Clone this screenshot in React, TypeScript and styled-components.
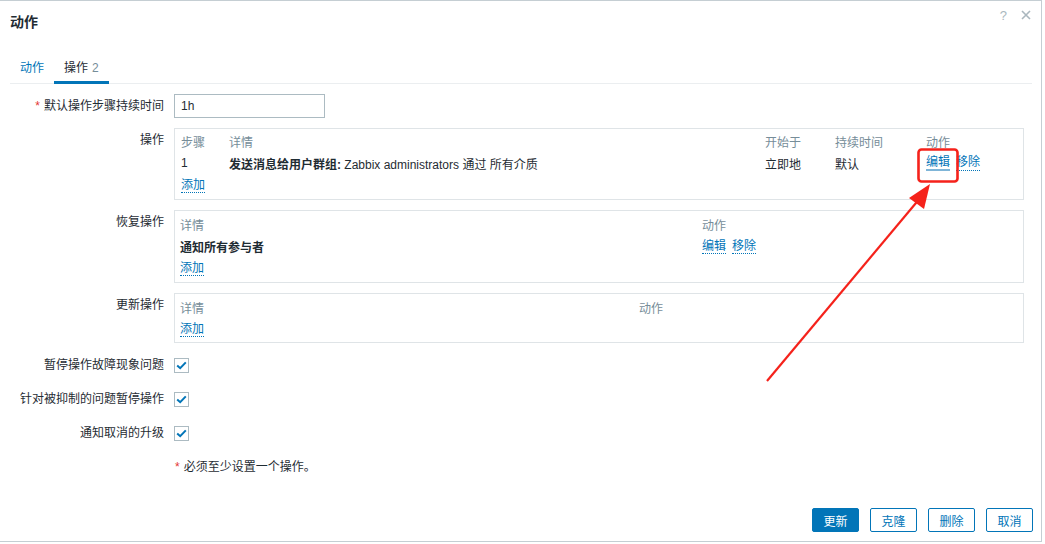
import styled, { createGlobalStyle } from "styled-components";

const GlobalStyle = createGlobalStyle`
  html, body {
    margin: 0;
    padding: 0;
    background: #ffffff;
  }
  body {
    font-family: "Liberation Sans", Arial, "Noto Sans CJK SC", sans-serif;
    font-size: 12px;
    color: #1f2c33;
  }
`;

const Dialog = styled.div`
  position: relative;
  box-sizing: border-box;
  width: 1042px;
  height: 542px;
  border: 1px solid #c5ced3;
  border-left: none;
  background: #fff;
  display: flex;
  flex-direction: column;
`;

const Header = styled.div`
  display: flex;
  align-items: center;
  height: 40px;
  padding: 0 10px;
`;

const Title = styled.h4`
  flex: 1;
  margin: 0;
  font-size: 14px;
  font-weight: bold;
  color: #1f2c33;
`;

const HelpIcon = styled.span`
  color: #aab7be;
  font-size: 13px;
  line-height: 1;
  margin-top: -12px;
`;

const CloseIcon = styled.span`
  display: inline-flex;
  margin-left: 14px;
  margin-top: -12px;
`;

const Body = styled.div`
  flex: 1;
  padding: 0 9px 0 10px;
  display: flex;
  flex-direction: column;
`;

const TabBar = styled.div`
  display: flex;
  margin-top: 14px;
  border-bottom: 1px solid #ebeef0;
  height: 28px;
`;

const Tab = styled.div<{ $active?: boolean }>`
  padding: 0 10px;
  line-height: 26px;
  color: ${({ $active }) => ($active ? "#1f2c33" : "#0275b8")};
  border-bottom: 3px solid ${({ $active }) => ($active ? "#0275b8" : "transparent")};
  margin-bottom: -1px;
`;

const Count = styled.span`
  color: #768d99;
  margin-left: 4px;
`;

const Form = styled.div`
  display: grid;
  grid-template-columns: 154px 1fr;
  column-gap: 10px;
  row-gap: 10px;
  margin-top: 10px;
  padding-right: 6px;
`;

const Label = styled.div`
  text-align: right;
  line-height: 24px;
  white-space: nowrap;
`;

const Asterisk = styled.span`
  color: #e33734;
  margin-right: 4px;
`;

const Field = styled.div`
  min-height: 24px;
  display: flex;
  align-items: center;
`;

const Input = styled.input`
  box-sizing: border-box;
  width: 151px;
  height: 24px;
  border: 1px solid #acbbc2;
  padding: 0 6px;
  font: inherit;
  color: #1f2c33;
  outline: none;
`;

const TableBox = styled.div<{ $pad: string }>`
  box-sizing: border-box;
  width: 850px;
  border: 1px solid #dfe4e7;
  padding: ${({ $pad }) => $pad};
`;

const TableRow = styled.div<{ $cols: string }>`
  display: grid;
  grid-template-columns: ${({ $cols }) => $cols};
  height: 22px;
  align-items: center;
  white-space: nowrap;
`;

const Th = styled.div`
  color: #768d99;
`;

const Td = styled.div``;

const Strong = styled.b`
  font-weight: bold;
`;

const LinkGroup = styled.div`
  display: flex;
  gap: 6px;
`;

const Link = styled.a<{ $hover?: boolean }>`
  color: #0275b8;
  text-decoration: none;
  line-height: 14px;
  border-bottom: ${({ $hover }) => ($hover ? "2px solid #7fb5d8" : "1px dotted #0275b8")};
  cursor: pointer;
`;

const Checkbox = styled.span`
  box-sizing: border-box;
  width: 15px;
  height: 15px;
  border: 1px solid #acbbc2;
  display: inline-flex;
  align-items: center;
  justify-content: center;
  background: #fff;
`;

const Note = styled.div`
  line-height: 24px;
  padding-left: 1px;
`;

const Footer = styled.div`
  display: flex;
  justify-content: flex-end;
  gap: 11px;
  padding: 0 8px 9px 0;
`;

const Button = styled.button<{ $primary?: boolean }>`
  box-sizing: border-box;
  width: 47px;
  height: 24px;
  font: inherit;
  border: 1px solid #0275b8;
  border-radius: 2px;
  background: ${({ $primary }) => ($primary ? "#0275b8" : "#fff")};
  color: ${({ $primary }) => ($primary ? "#fff" : "#0275b8")};
  padding: 0;
  cursor: pointer;
`;

const Annotation = styled.svg`
  position: absolute;
  left: 0;
  top: 0;
  pointer-events: none;
`;

const opCols = "48px 536px 70px 91px 1fr";

const Check = () => (
  <Checkbox>
    <svg width="11" height="9" viewBox="0 0 11 9">
      <path d="M1.2 4.4 L4.2 7.2 L9.8 1.4" fill="none" stroke="#0275b8" strokeWidth="2" />
    </svg>
  </Checkbox>
);

export default function App() {
  return (
    <>
      <GlobalStyle />
      <Dialog>
        <Header>
          <Title>动作</Title>
          <HelpIcon>?</HelpIcon>
          <CloseIcon>
            <svg width="10" height="10" viewBox="0 0 10 10">
              <path d="M1 1 L9 9 M9 1 L1 9" stroke="#aab7be" strokeWidth="1.6" />
            </svg>
          </CloseIcon>
        </Header>
        <Body>
          <TabBar>
            <Tab>动作</Tab>
            <Tab $active>
              操作<Count>2</Count>
            </Tab>
          </TabBar>

          <Form>
            <Label>
              <Asterisk>*</Asterisk>默认操作步骤持续时间
            </Label>
            <Field>
              <Input defaultValue="1h" />
            </Field>

            <Label>操作</Label>
            <TableBox $pad="1px 6px 3px">
              <TableRow $cols={opCols}>
                <Th>步骤</Th>
                <Th>详情</Th>
                <Th>开始于</Th>
                <Th>持续时间</Th>
                <Th>动作</Th>
              </TableRow>
              <TableRow $cols={opCols}>
                <Td>1</Td>
                <Td>
                  <Strong>发送消息给用户群组:</Strong> Zabbix administrators 通过 所有介质
                </Td>
                <Td>立即地</Td>
                <Td>默认</Td>
                <LinkGroup>
                  <Link $hover>编辑</Link>
                  <Link>移除</Link>
                </LinkGroup>
              </TableRow>
              <TableRow $cols="1fr">
                <Td>
                  <Link>添加</Link>
                </Td>
              </TableRow>
            </TableBox>

            <Label>恢复操作</Label>
            <TableBox $pad="2px 6px 3px 5px">
              <TableRow $cols="522px 1fr">
                <Th>详情</Th>
                <Th>动作</Th>
              </TableRow>
              <TableRow $cols="522px 1fr">
                <Td>
                  <Strong>通知所有参与者</Strong>
                </Td>
                <LinkGroup>
                  <Link>编辑</Link>
                  <Link>移除</Link>
                </LinkGroup>
              </TableRow>
              <TableRow $cols="1fr">
                <Td>
                  <Link>添加</Link>
                </Td>
              </TableRow>
            </TableBox>

            <Label>更新操作</Label>
            <TableBox $pad="2px 6px 2px 5px">
              <TableRow $cols="459px 1fr">
                <Th>详情</Th>
                <Th>动作</Th>
              </TableRow>
              <TableRow $cols="1fr">
                <Td>
                  <Link>添加</Link>
                </Td>
              </TableRow>
            </TableBox>

            <Label>暂停操作故障现象问题</Label>
            <Field>
              <Check />
            </Field>

            <Label>针对被抑制的问题暂停操作</Label>
            <Field>
              <Check />
            </Field>

            <Label>通知取消的升级</Label>
            <Field>
              <Check />
            </Field>

            <div />
            <Note>
              <Asterisk>*</Asterisk>必须至少设置一个操作。
            </Note>
          </Form>
        </Body>
        <Footer>
          <Button $primary>更新</Button>
          <Button>克隆</Button>
          <Button>删除</Button>
          <Button>取消</Button>
        </Footer>

        <Annotation width="1042" height="542" viewBox="0 0 1042 542">
          <rect x="918.5" y="148.5" width="39" height="32" rx="3" fill="none" stroke="#f5221b" strokeWidth="2.6" />
          <line x1="767" y1="380" x2="921" y2="196" stroke="#f5221b" strokeWidth="2.2" />
          <polygon points="930,183 909,197 924,208" fill="#f5221b" />
        </Annotation>
      </Dialog>
    </>
  );
}
